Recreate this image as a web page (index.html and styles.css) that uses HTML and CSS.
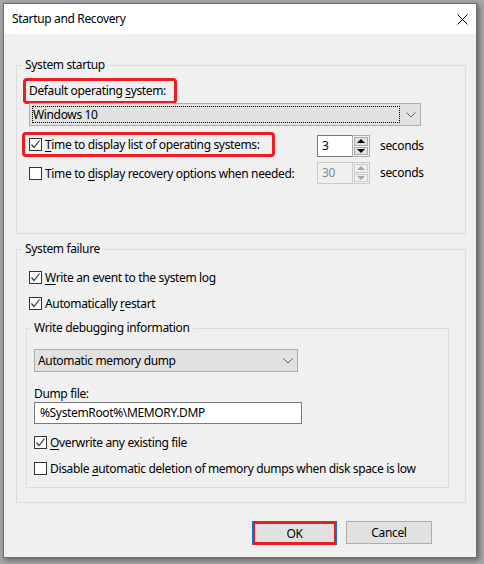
FILE: index.html
```html
<!DOCTYPE html>
<html lang="en">
<head>
    <meta charset="UTF-8">
    <title>Startup and Recovery</title>
    <link rel="stylesheet" href="styles.css">
</head>
<body>
    <div class="window">
        <div class="titlebar">
            <span class="title">Startup and Recovery</span>
            <svg class="close" width="11" height="11" viewBox="0 0 11 11">
                <path d="M0.5 0.5 L10.5 10.5 M10.5 0.5 L0.5 10.5" stroke="#000" stroke-width="1"/>
            </svg>
        </div>

        <div class="content">
            <fieldset class="group">
                <legend>System startup</legend>
                <div class="mark mark-os">Default operating <u>s</u>ystem:</div>
                <div class="combo combo-os">
                    <span class="focus">Windows 10</span>
                    <svg class="chevron" width="10" height="6" viewBox="0 0 10 6"><polyline points="0.5,0.5 5,5 9.5,0.5" fill="none" stroke="#606060"/></svg>
                </div>

                <div class="timers">
                    <div class="mark mark-list">
                        <label class="check">
                            <span class="box"><svg width="11" height="11" viewBox="0 0 11 11"><polyline points="1.5,5.5 4,8.5 9.5,1.5" fill="none" stroke="#333" stroke-width="1.2"/></svg></span>
                            <span><u>T</u>ime to display list of operating systems:</span>
                        </label>
                    </div>
                    <div class="spin spin-a">
                        <span class="spin-value">3</span>
                        <span class="spin-btns">
                            <span class="arrow"><i class="up"></i></span>
                            <span class="arrow"><i class="down"></i></span>
                        </span>
                    </div>
                    <span class="unit unit-a">seconds</span>

                    <label class="check check-b">
                        <span class="box"></span>
                        <span>Time to <u>d</u>isplay recovery options when needed:</span>
                    </label>
                    <div class="spin disabled">
                        <span class="spin-value">30</span>
                        <span class="spin-btns">
                            <span class="arrow"><i class="up"></i></span>
                            <span class="arrow"><i class="down"></i></span>
                        </span>
                    </div>
                    <span class="unit">seconds</span>
                </div>
            </fieldset>

            <fieldset class="group failure">
                <legend>System failure</legend>
                <div class="checks">
                    <label class="check">
                        <span class="box"><svg width="11" height="11" viewBox="0 0 11 11"><polyline points="1.5,5.5 4,8.5 9.5,1.5" fill="none" stroke="#333" stroke-width="1.2"/></svg></span>
                        <span><u>W</u>rite an event to the system log</span>
                    </label>
                    <label class="check">
                        <span class="box"><svg width="11" height="11" viewBox="0 0 11 11"><polyline points="1.5,5.5 4,8.5 9.5,1.5" fill="none" stroke="#333" stroke-width="1.2"/></svg></span>
                        <span>Automatically <u>r</u>estart</span>
                    </label>
                </div>

                <fieldset class="group debug">
                    <legend>Write debugging information</legend>
                    <div class="combo combo-dump">
                        <span class="combo-text">Automatic memory dump</span>
                        <svg class="chevron" width="10" height="6" viewBox="0 0 10 6"><polyline points="0.5,0.5 5,5 9.5,0.5" fill="none" stroke="#606060"/></svg>
                    </div>
                    <div class="field-label">Dump file:</div>
                    <div class="textbox">%SystemRoot%\MEMORY.DMP</div>
                    <div class="checks dump-checks">
                        <label class="check">
                            <span class="box"><svg width="11" height="11" viewBox="0 0 11 11"><polyline points="1.5,5.5 4,8.5 9.5,1.5" fill="none" stroke="#333" stroke-width="1.2"/></svg></span>
                            <span><u>O</u>verwrite any existing file</span>
                        </label>
                        <label class="check">
                            <span class="box"></span>
                            <span>Disable <u>a</u>utomatic deletion of memory dumps when disk space is low</span>
                        </label>
                    </div>
                </fieldset>
            </fieldset>

            <div class="actions">
                <button class="btn btn-ok">OK</button>
                <button class="btn btn-cancel">Cancel</button>
            </div>
        </div>
    </div>
</body>
</html>
```

FILE: styles.css
```css
html, body {
    margin: 0;
    padding: 0;
    height: 100%;
}

body {
    background: #a8a8a8;
    font-family: "Noto Sans", "Open Sans", sans-serif;
    font-size: 12px;
    letter-spacing: -0.35px;
    color: #000;
    overflow: hidden;
}

u {
    text-decoration-thickness: 1px;
    text-underline-offset: 2px;
}

.window {
    margin: 3px 0 0 3px;
    width: 474px;
    height: 555px;
    box-sizing: border-box;
    border: 1px solid #707070;
    background: #f0f0f0;
    box-shadow: 2px 2px 6px rgba(0, 0, 0, 0.45);
}

.titlebar {
    height: 30px;
    background: #fff;
    display: flex;
    align-items: center;
    justify-content: space-between;
    padding: 0 8px 0 8px;
}

.title {
    margin-top: -1px;
}

.close {
    margin-top: 1px;
}

.content {
    padding: 23px 10px 0 12px;
}

.group {
    margin: 0;
    padding: 0;
    border: 1px solid #dcdcdc;
    min-inline-size: 0;
}

.group > legend {
    padding: 0 3px;
    margin-left: 5px;
    line-height: 16px;
}

.group:first-child {
    padding-bottom: 49px;
}

/* red highlight boxes */
.mark {
    box-sizing: border-box;
    border: 3px solid #ec1c24;
    border-radius: 4px;
}

.mark-os {
    margin: 5px 0 0 6px;
    width: 154px;
    height: 26px;
    padding-left: 3px;
    line-height: 20px;
}

.combo {
    box-sizing: border-box;
    height: 23px;
    border: 1px solid #adadad;
    background: #e1e1e1;
    display: flex;
    align-items: center;
}

.combo-os {
    margin: -1px 0 0 12px;
    width: 392px;
    padding: 2px 4px 2px 2px;
}

.focus {
    flex: 1;
    height: 100%;
    box-sizing: border-box;
    border: 1px dotted #000;
    line-height: 15px;
}

.chevron {
    margin-left: 6px;
}

.timers {
    margin-top: 6px;
    padding-left: 5px;
    display: grid;
    grid-template-columns: 295px 53px auto;
    grid-template-rows: 25px 22px;
    row-gap: 5px;
}

.mark-list {
    width: 253px;
    height: 25px;
    padding-left: 4px;
    display: flex;
    align-items: center;
}

.check {
    display: flex;
    align-items: center;
    gap: 3px;
    height: 20px;
}

.check-b {
    height: 22px;
    padding-left: 7px;
}

.box {
    box-sizing: border-box;
    width: 13px;
    height: 13px;
    border: 1px solid #333;
    background: #fff;
    display: flex;
}

.spin {
    display: flex;
    height: 22px;
}

.spin-a {
    align-self: end;
}

.spin-value {
    box-sizing: border-box;
    width: 35px;
    height: 22px;
    border: 1px solid #7a7a7a;
    border-right: 0;
    background: #fff;
    padding-left: 4px;
    line-height: 20px;
}

.spin-btns {
    box-sizing: border-box;
    width: 18px;
    height: 22px;
    border: 1px solid #adadad;
    padding: 1px;
    display: flex;
    flex-direction: column;
    gap: 1px;
}

.arrow {
    flex: 1;
    box-sizing: border-box;
    border: 1px solid #adadad;
    background: #e1e1e1;
    display: flex;
    align-items: center;
    justify-content: center;
}

.arrow i {
    width: 0;
    height: 0;
    border-left: 4px solid transparent;
    border-right: 4px solid transparent;
}

.arrow .up {
    border-bottom: 4px solid #000;
}

.arrow .down {
    border-top: 4px solid #000;
}

.disabled .spin-value {
    background: #f0f0f0;
    border-color: #cccccc;
    color: #8a8a8a;
}

.disabled .spin-btns,
.disabled .arrow {
    border-color: #cccccc;
    background: #f0f0f0;
}

.disabled .arrow .up {
    border-bottom-color: #a6a6a6;
}

.disabled .arrow .down {
    border-top-color: #a6a6a6;
}

.unit {
    margin-left: 10px;
    line-height: 22px;
}

.unit-a {
    align-self: end;
}

.failure {
    margin-top: 7px;
    padding-bottom: 14px;
}

.checks {
    margin-top: 10px;
    padding-left: 12px;
    display: flex;
    flex-direction: column;
    gap: 6px;
}

.debug {
    margin: 7px 0 0 9px;
    width: 423px;
    box-sizing: border-box;
    padding-bottom: 9px;
}

.debug > legend {
    margin-left: 4px;
}

.combo-dump {
    margin: 13px 0 0 7px;
    width: 264px;
    padding: 0 4px 0 3px;
}

.combo-text {
    flex: 1;
}

.field-label {
    margin: 14px 0 0 7px;
    line-height: 16px;
}

.textbox {
    box-sizing: border-box;
    margin-left: 7px;
    width: 268px;
    height: 22px;
    border: 1px solid #7a7a7a;
    background: #fff;
    padding-left: 5px;
    line-height: 20px;
}

.dump-checks {
    margin-top: 8px;
    padding-left: 7px;
}

.actions {
    margin: 18px 34px 0 0;
    display: flex;
    justify-content: flex-end;
    gap: 9px;
}

.btn {
    box-sizing: border-box;
    height: 24px;
    font: inherit;
    letter-spacing: inherit;
    color: #000;
    background: #e1e1e1;
    border: 1px solid #adadad;
    padding: 0;
}

.btn-ok {
    width: 85px;
    border-color: #0078d7;
    border-top-color: #ec1c24;
    border-bottom-color: #ec1c24;
    box-shadow: inset 0 0 0 2px #ec1c24;
}

.btn-cancel {
    width: 86px;
    height: 23px;
}
```
